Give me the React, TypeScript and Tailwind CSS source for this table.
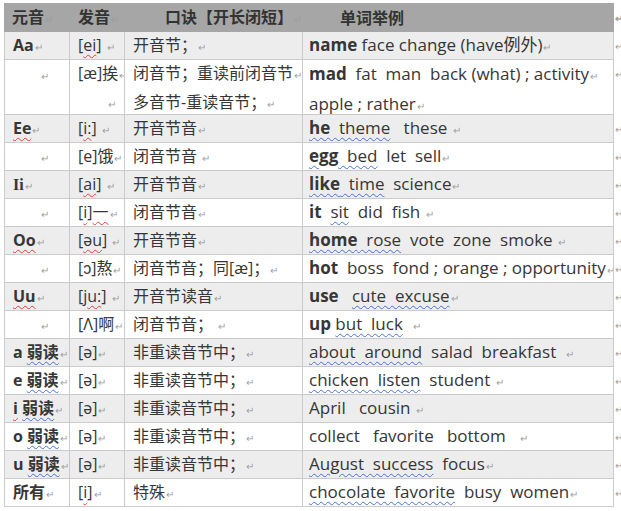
import React from "react";

const M = () => <span className="text-[10px] text-[#a0a0a0] ml-px">↵</span>;
const R = ({ children }: { children: React.ReactNode }) => (
  <span className="underline decoration-wavy decoration-[#e0403a] decoration-1 underline-offset-[3px]">{children}</span>
);
const B = ({ children }: { children: React.ReactNode }) => (
  <span className="underline decoration-wavy decoration-[#4a72d0] decoration-1 underline-offset-[3px]">{children}</span>
);

const cell = "border-b border-r border-[#cbcbcb] flex items-center whitespace-pre overflow-hidden";
const cols = "grid grid-cols-[66px_55px_178px_311px_7px]";

type Row = {
  c1: React.ReactNode;
  c2: React.ReactNode;
  c3: React.ReactNode;
  c4: React.ReactNode;
  gray: boolean;
};

const rows: Row[] = [
  { gray: true, c1: <><b>Aa</b><M /></>, c2: <>[<R>ei</R>] <M /></>, c3: <>开音节；<M /></>, c4: <><b>name</b> face change (have例外)<M /></> },
  { gray: true, c1: <><R><b>Ee</b></R><M /></>, c2: <>[<R>i:</R>] <M /></>, c3: <>开音节音<M /></>, c4: <><B><b>he</b>  theme</B>   these <M /></> },
  { gray: false, c1: null, c2: <>[e]饿<M /></>, c3: <>闭音节音 <M /></>, c4: <><B><b>egg</b>  bed</B>  let  sell<M /></> },
  { gray: true, c1: <><b className="font-['Liberation_Serif',serif]">Ii</b><M /></>, c2: <>[<R>ai</R>] <M /></>, c3: <>开音节音<M /></>, c4: <><B><b>like</b>  time</B>  science<M /></> },
  { gray: false, c1: null, c2: <>[<R>i</R>]<R>一</R><M /></>, c3: <>闭音节音<M /></>, c4: <><b>it</b>  <B>sit</B>  did  fish <M /></> },
  { gray: true, c1: <><R><b>Oo</b></R><M /></>, c2: <>[<R>əu</R>] <M /></>, c3: <>开音节音<M /></>, c4: <><B><b>home</b>  rose</B>  vote  zone  smoke <M /></> },
  { gray: false, c1: null, c2: <>[ɔ]熬<M /></>, c3: <>闭音节音；同[æ]；<M /></>, c4: <><b>hot</b>  boss  fond ; orange ; opportunity<M /></> },
  { gray: true, c1: <><R><b>Uu</b></R><M /></>, c2: <>[j<R>u:</R>] <M /></>, c3: <>开音节读音<M /></>, c4: <><b>use</b>   <B>cute  excuse</B><M /></> },
  { gray: false, c1: null, c2: <>[Λ]<span className="text-[#363636]">啊</span><M /></>, c3: <>闭音节音； <M /></>, c4: <><b>up</b> <B>but  luck</B>  <M /></> },
  { gray: true, c1: <><b>a</b> <B><b>弱读</b></B><M /></>, c2: <>[ə]<M /></>, c3: <>非重读音节中；<M /></>, c4: <><B>about  around</B>  salad  breakfast  <M /></> },
  { gray: false, c1: <><b>e</b> <B><b>弱读</b></B><M /></>, c2: <>[ə]<M /></>, c3: <>非重读音节中；<M /></>, c4: <><B>chicken  listen</B>  student <M /></> },
  { gray: true, c1: <><R><b>i</b></R> <B><b>弱读</b></B><M /></>, c2: <>[ə]<M /></>, c3: <>非重读音节中；<M /></>, c4: <>April   cousin <M /></> },
  { gray: false, c1: <><b>o</b> <B><b>弱读</b></B><M /></>, c2: <>[ə]<M /></>, c3: <>非重读音节中；<M /></>, c4: <>collect   favorite   bottom   <M /></> },
  { gray: true, c1: <><b>u</b> <B><b>弱读</b></B><M /></>, c2: <>[ə]<M /></>, c3: <>非重读音节中；<M /></>, c4: <><B>August  success</B>  focus<M /></> },
  { gray: false, c1: <><b>所有</b><M /></>, c2: <>[<R>i</R>]<M /></>, c3: <>特殊<M /></>, c4: <><B>chocolate  favorite</B>  busy  women<M /></> },
];

function BodyRow({ r }: { r: Row }) {
  const bg = r.gray ? "bg-[#ededed]" : "bg-white";
  const h = "h-[28px]";
  return (
    <div className={cols}>
      <div className={`${cell} ${bg} ${h} border-l pl-2 ${r.c1 ? "" : "justify-end pr-5"}`}>
        <span>{r.c1 ?? <M />}</span>
      </div>
      <div className={`${cell} ${bg} ${h} pl-2`}><span>{r.c2}</span></div>
      <div className={`${cell} ${bg} ${h} pl-2`}><span>{r.c3}</span></div>
      <div className={`${cell} ${bg} ${h} pl-1.5 text-[17px]`}><span>{r.c4}</span></div>
      <div className={`${h} flex items-center`}><M /></div>
    </div>
  );
}

export default function App() {
  const first = rows[0];
  const rest = rows.slice(1);
  return (
    <div className="w-[621px] h-[511px] bg-white pt-[3px] pl-[4px] text-[16px] text-[#363636] font-['Open_Sans','Noto_Sans_CJK_SC',sans-serif] leading-[28px]">
      {/* header */}
      <div className={`${cols} h-[29px] font-bold text-[#333]`}>
        <div className="bg-[#a6a6a6] flex items-center pl-2"><span>元音<M /></span></div>
        <div className="bg-[#a6a6a6] flex items-center pl-2"><span>发音<M /></span></div>
        <div className="bg-[#a6a6a6] flex items-center pl-[40px]"><span>口诀【开长闭短】<M /></span></div>
        <div className="bg-[#a6a6a6] flex items-center pl-[37px]"><span>单词举例</span></div>
        <div className="flex items-center"><M /></div>
      </div>
      <BodyRow r={first} />
      {/* two-line row */}
      <div className={cols}>
        <div className={`${cell} !items-start bg-white h-[55px] border-l justify-end pr-5`}><span><M /></span></div>
        <div className={`${cell} bg-white h-[55px] !flex-col !items-stretch pl-2 pr-2 leading-[27px]`}>
          <div>[æ]挨<M /></div>
          <div className="text-right"><M /></div>
        </div>
        <div className={`${cell} bg-white h-[55px] !flex-col !items-start pl-2 leading-[27px]`}>
          <div>闭音节；重读前闭音节<M /></div>
          <div>多音节-重读音节；<M /></div>
        </div>
        <div className={`${cell} bg-white h-[55px] !flex-col !items-start pl-1.5 text-[17px] leading-[27px]`}>
          <div><b>mad</b>  fat  man  back (what) ; activity<M /></div>
          <div>apple ; rather<M /></div>
        </div>
        <div className="h-[28px] flex items-center"><M /></div>
      </div>
      {rest.map((r, i) => (
        <BodyRow key={i} r={r} />
      ))}
    </div>
  );
}
